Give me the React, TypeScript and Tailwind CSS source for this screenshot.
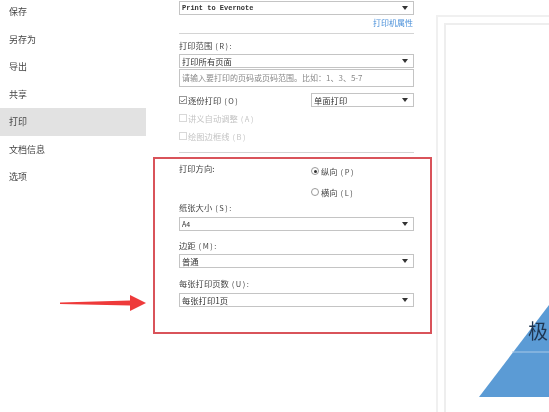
import type {ReactNode} from 'react';

const cjk = '[font-family:"Noto_Sans_CJK_SC","Liberation_Sans",sans-serif]';

const menu = ['保存', '另存为', '导出', '共享', '打印', '文档信息', '选项'];

function Select({children, className = ''}: {children: ReactNode; className?: string}) {
  return (
    <div
      className={`flex h-[14px] items-center justify-between border border-[#c4c4c4] bg-white pl-[2px] pr-[5px] text-[8.3px] leading-none text-[#333] ${className}`}
    >
      <span>{children}</span>
      <span className="h-0 w-0 border-x-[3px] border-t-[4px] border-x-transparent border-t-[#333]" />
    </div>
  );
}

// accelerator key after a label, wide like the original's full-width brackets
function Key({children}: {children: ReactNode}) {
  return <span className="ml-[3px] text-[7.5px] leading-none tracking-[1.5px]">{children}</span>;
}

function Label({children, className = ''}: {children: ReactNode; className?: string}) {
  return <div className={`h-[12px] text-[8.3px] leading-[11px] text-[#444] ${className}`}>{children}</div>;
}

function Check({label, hotkey, checked, off}: {label: string; hotkey: string; checked?: boolean; off?: boolean}) {
  return (
    <div className={`flex h-[12px] items-center gap-[1px] text-[8.3px] leading-[11px] ${off ? 'text-[#c4c4c4]' : 'text-[#444]'}`}>
      <span className={`flex h-[8px] w-[8px] shrink-0 items-center justify-center border ${off ? 'border-[#d8d8d8]' : 'border-[#999]'}`}>
        {checked && (
          <svg viewBox="0 0 8 8" className="h-[7px] w-[7px]">
            <path d="M1 4l2 2 4-4" fill="none" stroke="#333" strokeWidth="1" />
          </svg>
        )}
      </span>
      <span>
        {label}
        <Key>{hotkey}</Key>
      </span>
    </div>
  );
}

function Radio({label, hotkey, checked}: {label: string; hotkey: string; checked?: boolean}) {
  return (
    <div className="flex h-[12px] items-center gap-[2px] text-[8.3px] leading-[11px] text-[#444]">
      <span className="flex h-[8px] w-[8px] shrink-0 items-center justify-center rounded-full border border-[#999]">
        {checked && <span className="h-[3px] w-[3px] rounded-full bg-[#333]" />}
      </span>
      <span>
        {label}
        <Key>{hotkey}</Key>
      </span>
    </div>
  );
}

export default function App() {
  return (
    <div className={`relative flex h-[412px] w-[549px] overflow-hidden bg-white blur-[0.35px] ${cjk}`}>
      <aside className="-mt-[2px] w-[146px] shrink-0">
        {menu.map(item => (
          <div
            key={item}
            className={`flex h-[27.5px] items-center pl-[9px] text-[9px] text-[#444] ${item === '打印' ? 'bg-[#e2e2e2]' : ''}`}
          >
            {item}
          </div>
        ))}
      </aside>

      <main className="ml-[33px] w-[235px] shrink-0 pt-[1px]">
        <Select className="font-['Liberation_Mono'] !text-[7px] font-bold">Print to Evernote</Select>
        <div className="mt-[2px] h-[12px] pr-[1px] text-right text-[8px] leading-[12px] text-[#4a90d9]">打印机属性</div>
        <div className="mt-[4px] h-px bg-[#d4d4d4]" />
        <Label className="mt-[6px]">打印范围<Key>(R):</Key></Label>
        <Select className="mt-[2px]">打印所有页面</Select>
        <div className="mt-[1px] flex h-[18px] items-center border border-[#c4c4c4] pl-[2px] text-[8px] text-[#888]">
          请输入要打印的页码或页码范围。比如：1、3、5-7
        </div>
        <div className="mt-[6px] flex items-center justify-between">
          <Check label="逐份打印" hotkey="(O)" checked />
          <Select className="w-[103px]">单面打印</Select>
        </div>
        <div className="mt-[5px]">
          <Check label="讲义自动调整" hotkey="(A)" off />
        </div>
        <div className="mt-[6px]">
          <Check label="绘图边框线" hotkey="(B)" off />
        </div>
        <div className="mt-[10px] h-px bg-[#d4d4d4]" />

        <div className="mt-[10px] flex justify-between">
          <Label>打印方向:</Label>
          <div className="mt-[2px] flex w-[103px] flex-col gap-[9px] whitespace-nowrap">
            <Radio label="纵向" hotkey="(P)" checked />
            <Radio label="横向" hotkey="(L)" />
          </div>
        </div>
        <Label className="mt-[4px]">纸张大小<Key>(S):</Key></Label>
        <Select className="mt-[3px] !text-[7px]">A4</Select>
        <Label className="mt-[9px]">边距<Key>(M):</Key></Label>
        <Select className="mt-[2px]">普通</Select>
        <Label className="mt-[10px]">每张打印页数<Key>(U):</Key></Label>
        <Select className="mt-[3px]">每张打印1页</Select>
      </main>

      <section className="ml-[22px] mt-[15px] flex-1 border-l-2 border-t-2 border-[#f0f0f0] pl-[6px] pt-[6px]">
        <div className="relative h-full border-l-2 border-t-2 border-[#eeeeee]">
          <svg viewBox="0 0 105 374" className="absolute left-0 top-0 h-[374px] w-[105px]">
            <polygon points="33,372 103,280 103,372" fill="#5b9bd5" />
            <line x1="66" y1="327" x2="103" y2="327" stroke="#a9c9e8" strokeWidth="1" />
          </svg>
          <span className="absolute left-[82px] top-[296px] font-['Noto_Sans_CJK_SC'] text-[20px] leading-none text-[#1f3550]">
            极
          </span>
        </div>
      </section>

      {/* annotation */}
      <div className="absolute left-[153px] top-[157px] h-[177px] w-[279px] border-2 border-[#d9535a]" />
      <svg viewBox="0 0 90 20" className="absolute left-[58px] top-[293px] h-[20px] w-[90px]">
        <polygon points="2,9.5 72,7.5 72,2 88,10 72,18 72,12.5 2,11" fill="#ee3a3a" />
      </svg>
    </div>
  );
}
